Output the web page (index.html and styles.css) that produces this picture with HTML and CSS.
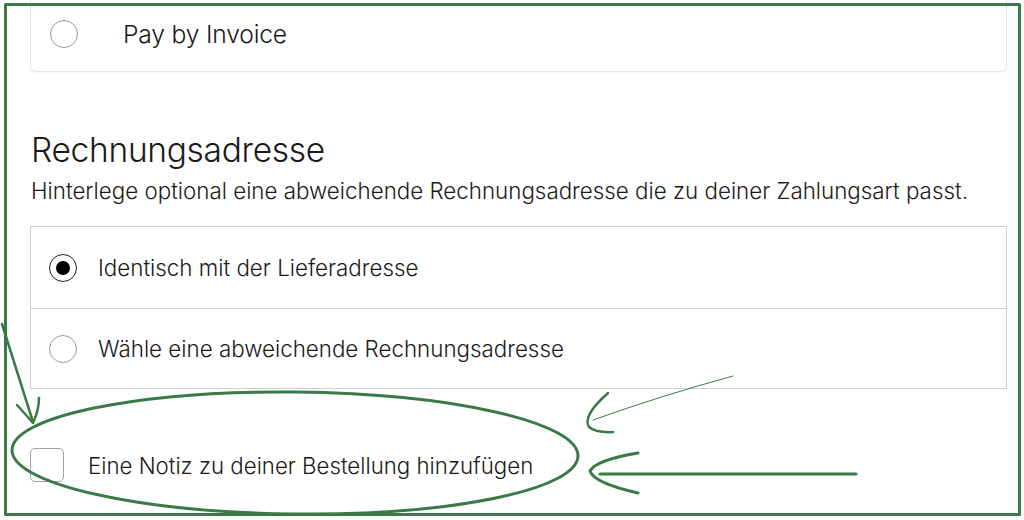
FILE: index.html
```html
<!DOCTYPE html>
<html lang="de">
<head>
<meta charset="utf-8">
<title>Rechnungsadresse</title>
<link rel="stylesheet" href="styles.css">
</head>
<body>
<main class="page">
  <div class="pay-card">
    <span class="radio"></span>
    <span class="pay-label">Pay by Invoice</span>
  </div>

  <h2 class="title">Rechnungsadresse</h2>
  <p class="subtitle">Hinterlege optional eine abweichende Rechnungsadresse die zu deiner Zahlungsart passt.</p>

  <div class="options">
    <div class="option">
      <span class="radio radio-checked"></span>
      <span class="option-label">Identisch mit der Lieferadresse</span>
    </div>
    <div class="option">
      <span class="radio"></span>
      <span class="option-label">Wähle eine abweichende Rechnungsadresse</span>
    </div>
  </div>

  <div class="note">
    <span class="checkbox"></span>
    <span class="note-label">Eine Notiz zu deiner Bestellung hinzufügen</span>
  </div>
</main>

<svg class="annotations" width="1024" height="520" viewBox="0 0 1024 520" fill="none" stroke="#3a7a45" stroke-linecap="round" stroke-linejoin="round">
  <rect x="5.5" y="4.5" width="1014" height="510" stroke-width="3"/>
  <ellipse cx="295" cy="453" rx="283" ry="61" stroke-width="3" transform="rotate(0.6 295 453)"/>
  <path d="M2 324 L33 422" stroke-width="2.5"/>
  <path d="M17 405 Q27 416 33 423 Q39 410 39 398" stroke-width="2.5"/>
  <path d="M733 376 Q660 396 593 420" stroke-width="1"/>
  <path d="M608 393 Q582 416 589 427 Q596 433 613 432" stroke-width="2.5"/>
  <path d="M600 474 L856 474" stroke-width="3"/>
  <path d="M638 453 Q596 460 590 471 Q594 483 638 493" stroke-width="3"/>
</svg>
</body>
</html>
```
FILE: styles.css
```css
html, body {
  margin: 0;
  padding: 0;
  background: #ffffff;
}

body {
  width: 1024px;
  height: 520px;
  overflow: hidden;
  position: relative;
  font-family: Inter, "Noto Sans", sans-serif;
  font-weight: 350;
  color: #1a1a1a;
}

.page {
  padding: 0 17px 0 30px;
  display: flex;
  flex-direction: column;
}

.pay-card {
  margin-top: -4px;
  height: 75px;
  border: 1px solid #e6e6e6;
  border-top: none;
  border-radius: 0 0 6px 6px;
  display: flex;
  align-items: center;
  padding-left: 19px;
  gap: 45px;
  box-shadow: 0 1px 2px rgba(0,0,0,0.04);
}

.pay-label {
  font-size: 24.7px;
  letter-spacing: -0.2px;
}

.radio {
  width: 28px;
  height: 28px;
  box-sizing: border-box;
  border: 1px solid #9a9a9a;
  border-radius: 50%;
  flex: none;
  display: flex;
  align-items: center;
  justify-content: center;
}

.radio-checked {
  border: 1.5px solid #222;
}

.radio-checked::after {
  content: "";
  width: 14px;
  height: 14px;
  border-radius: 50%;
  background: #000;
}

.title {
  margin: 58px 0 0 1px;
  font-size: 33.5px;
  font-weight: 350;
  line-height: 40px;
  letter-spacing: -0.3px;
}

.subtitle {
  margin: 8px 0 0 1px;
  font-size: 22.35px;
  line-height: 26px;
}

.options {
  margin-top: 22px;
  border: 1px solid #cfcfcf;
  display: flex;
  flex-direction: column;
}

.option {
  height: 81px;
  display: flex;
  align-items: center;
  padding-left: 18px;
  gap: 21px;
}

.option + .option {
  border-top: 1px solid #cfcfcf;
  height: 79px;
}

.option-label {
  font-size: 22.35px;
}

.note {
  margin-top: 59px;
  display: flex;
  align-items: center;
  gap: 24px;
}

.checkbox {
  width: 34px;
  height: 34px;
  box-sizing: border-box;
  border: 1px solid #a0a0a0;
  border-radius: 5px;
  flex: none;
}

.note-label {
  font-size: 22.25px;
}

.annotations {
  position: absolute;
  left: 0;
  top: 0;
  pointer-events: none;
}
```
